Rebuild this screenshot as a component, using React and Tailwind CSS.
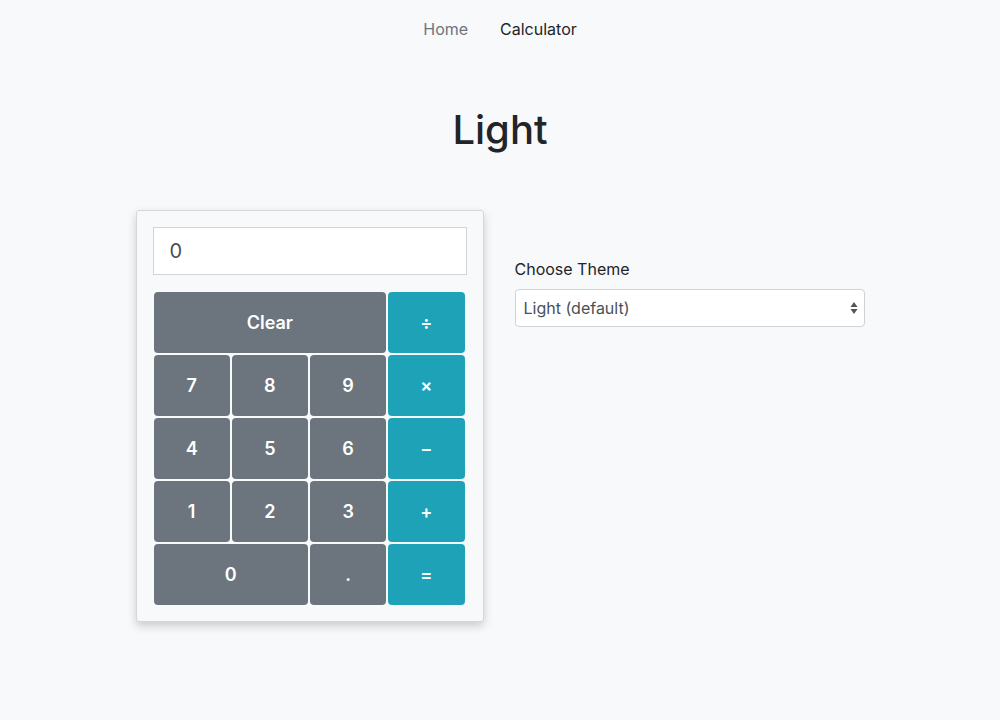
import React from "react";

const font = { fontFamily: "Inter, 'Liberation Sans', sans-serif" };

function Key({ label, op, span }) {
  return (
    <button
      className={`${span === 3 ? "col-span-3" : span === 2 ? "col-span-2" : ""} ${
        op ? "bg-[#1ea2b8]" : "bg-[#6c757d]"
      } rounded-[4px] text-white text-[18px] font-semibold h-[61px] flex items-center justify-center`}
    >
      {label}
    </button>
  );
}

export default function App() {
  return (
    <div className="min-h-[720px] bg-[#f8f9fa] text-[#212529]" style={font}>
      <nav className="pt-[9px] flex justify-center">
        <a className="px-4 py-2 text-[16px] leading-6 text-[#6c757d]">Home</a>
        <a className="px-4 py-2 text-[16px] leading-6 text-[#212529]">Calculator</a>
      </nav>

      <h1 className="mt-[57px] text-center text-[40px] leading-[48px] font-medium">Light</h1>

      <div className="mt-[56px] flex justify-center gap-[31px]">
        <div className="w-[348px] border border-[#d3d6da] rounded-[3px] bg-[#f8f9fa] p-4 shadow-[0_4px_10px_rgba(0,0,0,0.18)]">
          <input
            readOnly
            value="0"
            className="w-full h-[48px] border border-[#ced4da] bg-white px-4 text-[20px] text-[#495057] outline-none"
          />
          <div className="mt-[17px] ml-[1px] w-[311px] grid grid-cols-4 gap-[2px]">
            <Key label="Clear" span={3} />
            <Key label="÷" op />
            <Key label="7" />
            <Key label="8" />
            <Key label="9" />
            <Key label="×" op />
            <Key label="4" />
            <Key label="5" />
            <Key label="6" />
            <Key label="−" op />
            <Key label="1" />
            <Key label="2" />
            <Key label="3" />
            <Key label="+" op />
            <Key label="0" span={2} />
            <Key label="." />
            <Key label="=" op />
          </div>
        </div>

        <div className="w-[350px] mt-[47px]">
          <label className="block text-[16px] leading-6 mb-2 text-[#212529]">Choose Theme</label>
          <div className="relative">
            <select className="appearance-none w-full h-[38px] border border-[#ced4da] rounded-[4px] bg-white pl-2 text-[16px] text-[#495057] outline-none">
              <option>Light (default)</option>
              <option>Dark</option>
            </select>
            <svg
              className="absolute right-[7px] top-[12px] pointer-events-none"
              width="8"
              height="14"
              viewBox="0 0 8 14"
            >
              <path d="M4 1 L7.5 6 H0.5 Z" fill="#555" />
              <path d="M4 13 L7.5 8 H0.5 Z" fill="#555" />
            </svg>
          </div>
        </div>
      </div>
    </div>
  );
}
